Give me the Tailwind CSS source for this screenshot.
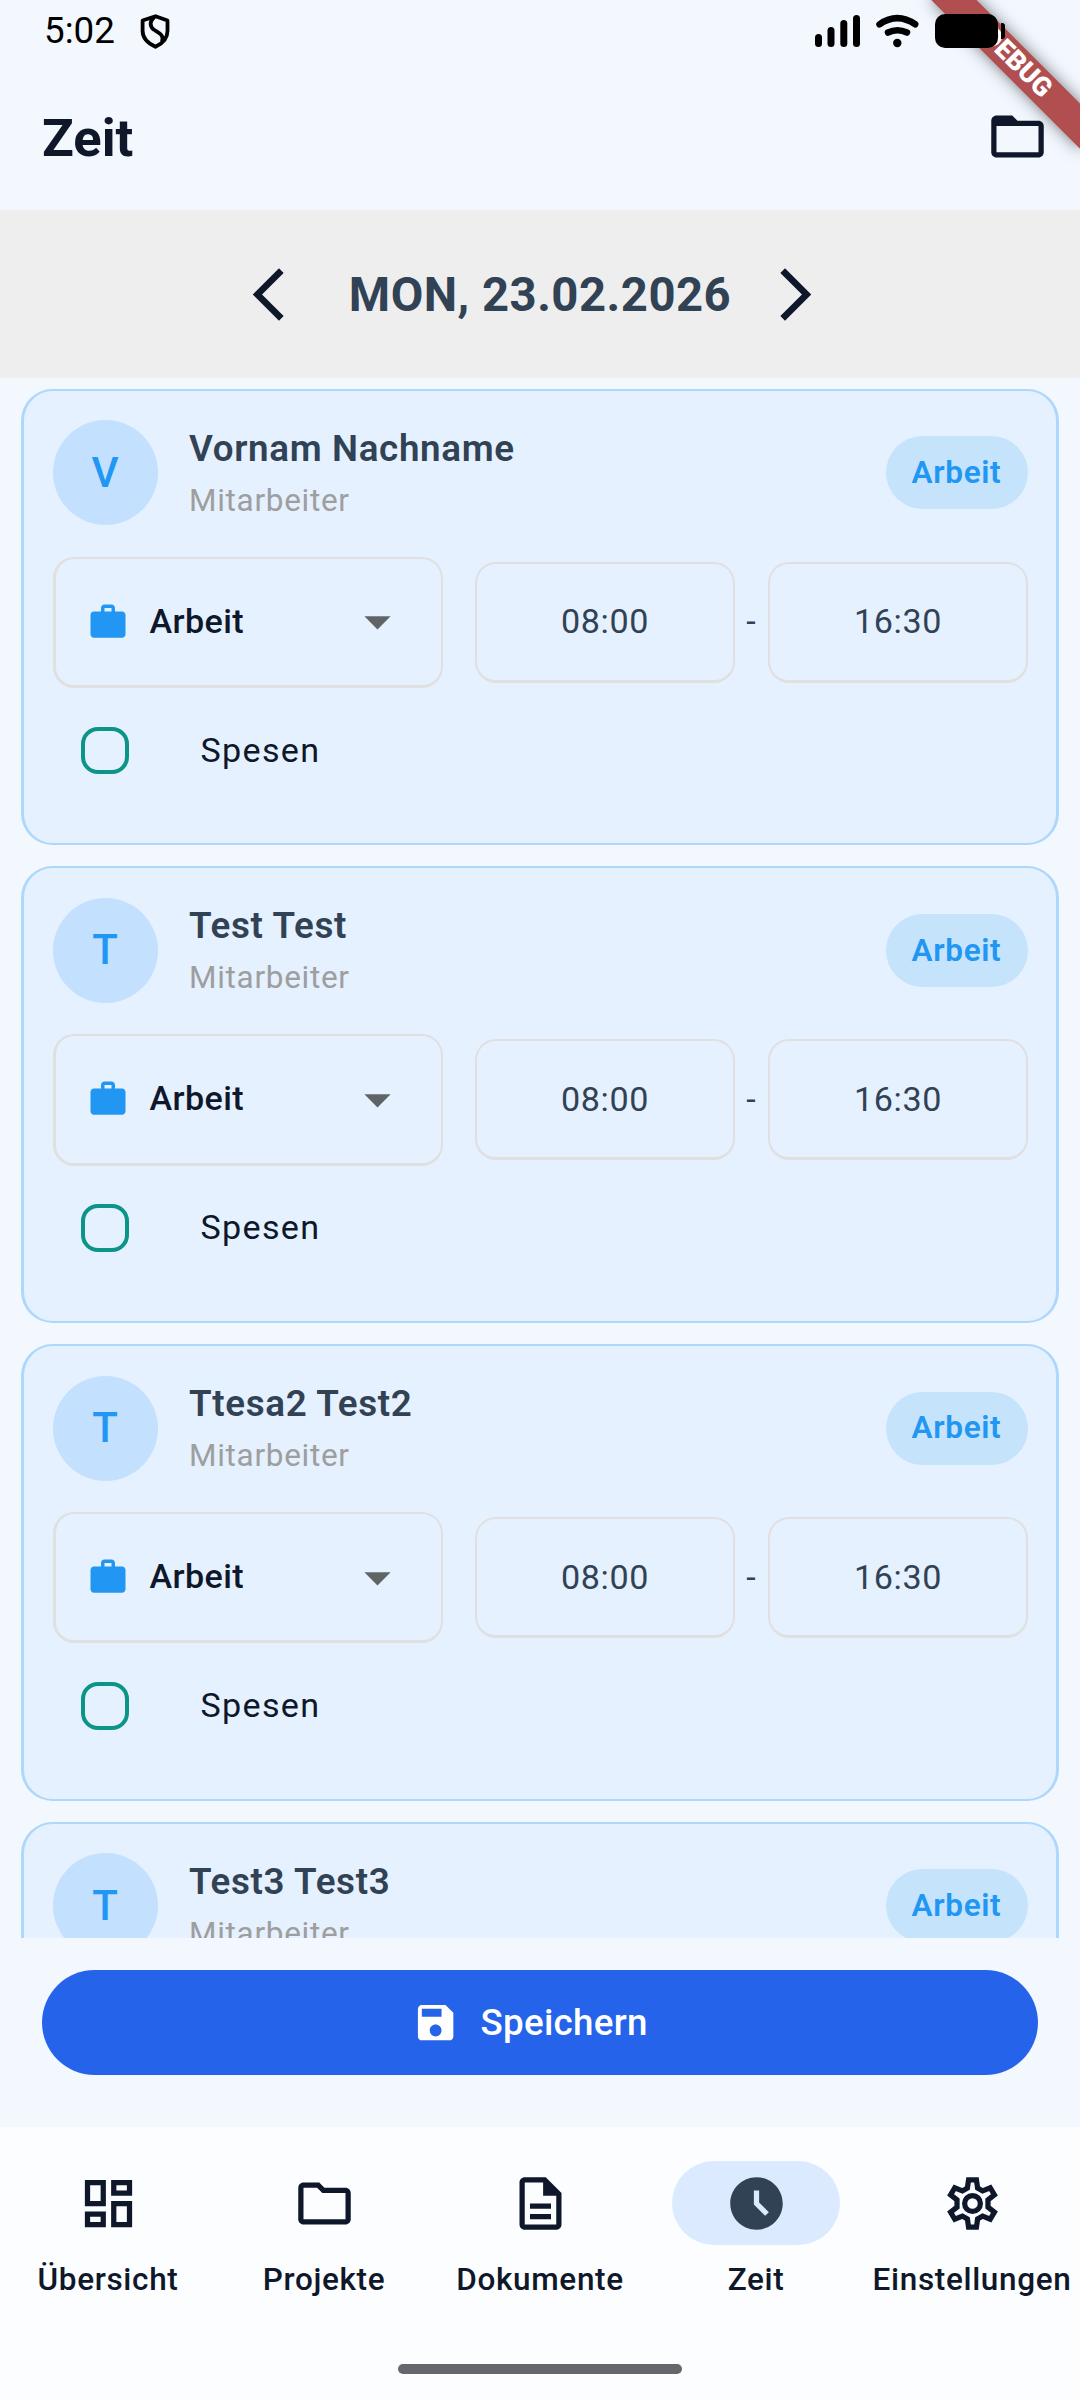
<!DOCTYPE html>
<html lang="de">
<head>
<meta charset="utf-8">
<title>Zeit</title>
<script src="https://cdn.jsdelivr.net/npm/@tailwindcss/browser@4"></script>
</head>
<body class="w-[1080px] h-[2400px] overflow-hidden bg-[#f3f8ff] font-['Roboto',sans-serif] text-[#0f172a]">
<div class="relative flex h-[2400px] w-[1080px] flex-col overflow-hidden">

  <!-- debug ribbon -->
  <div class="absolute top-0 right-0 h-[210px] w-[210px] overflow-hidden">
    <div class="absolute top-[47.35px] left-[41.9px] flex h-[31.5px] w-[210px] rotate-45 items-center justify-center bg-[#b04e50] text-[26.8px] leading-none font-black text-white shadow-[0_0_16px_rgba(0,0,0,0.5)]">DEBUG</div>
  </div>

  <!-- status bar -->
  <div class="relative flex h-[62px] shrink-0 items-start justify-between pl-[44px]">
    <div class="flex">
      <span class="mt-[9px] w-[96px] text-[36.75px] leading-[44px] text-black">5:02</span>
      <svg class="mt-[13px] h-[37px] w-[32px]" viewBox="0 0 32 37" fill="none" stroke="#000" stroke-width="3.800" stroke-linejoin="round"><path d="M15.500 3.200 27.500 7.500V18C27.500 25.500 21.500 31 15.500 33.800 9.500 31 2.600 25.500 2.600 18V7.500Z"/><path d="M14.500 4C9.500 8 9.500 13 13.500 16.500 18 19.500 25 22 22 29"/></svg>
    </div>
    <svg class="h-[62px] w-[270px]" viewBox="810 0 270 62" fill="#000">
      <rect x="815" y="34" width="7" height="13" rx="3.500"/><rect x="827.500" y="27" width="7" height="20" rx="3.500"/><rect x="840.300" y="20" width="7" height="27" rx="3.500"/><rect x="853" y="15" width="7" height="32" rx="3.500"/>
      <g fill="none" stroke="#000" stroke-width="6.500" stroke-linecap="round"><path d="M879.500 24.300Q897.300 12 915.200 24.300"/><path d="M888 32.500Q897.300 28 907 32.500"/></g>
      <circle cx="897.300" cy="43" r="4.200"/>
      <rect x="935" y="14" width="63" height="34" rx="10"/><path d="M1001 23h1a3 3 0 0 1 3 3v10a3 3 0 0 1-3 3h-1z"/>
    </svg>
  </div>

  <!-- app bar -->
  <header class="flex h-[148px] shrink-0 items-center justify-between pr-[31.5px] pl-[42px]">
    <h1 class="pt-[3px] text-[52.5px] leading-[64px] font-bold">Zeit</h1>
    <svg class="h-[63px] w-[63px]" viewBox="0 0 24 24" fill="#0f172a"><path d="M20 6h-8l-2-2H4c-1.100 0-1.990.9-1.990 2L2 18c0 1.100.9 2 2 2h16c1.100 0 2-.9 2-2V8c0-1.100-.9-2-2-2zm0 12H4V8h16v10z"/></svg>
  </header>

  <!-- date switcher -->
  <div class="flex h-[168px] shrink-0 items-center justify-center bg-[#eeeeee] pr-[16px]">
    <svg class="h-[63px] w-[63px]" viewBox="0 0 24 24" fill="#0f172a"><path d="M17.770 3.770 16 2 6 12l10 10 1.770-1.770L9.540 12z"/></svg>
    <span class="w-[463.500px] pt-[2px] pl-[16px] text-center text-[47.25px] leading-[60px] font-bold tracking-[0.5px] text-[#314254]">MON, 23.02.2026</span>
    <svg class="h-[63px] w-[63px]" viewBox="0 0 24 24" fill="#0f172a"><path d="M6.230 20.230 8 22l10-10L8 2 6.230 3.770 14.460 12z"/></svg>
  </div>

  <!-- employee list -->
  <main id="list" class="flex h-[1560px] shrink-0 flex-col gap-[21px] overflow-hidden px-[21px] pt-[10.5px]"></main>

  <!-- save -->
  <div class="h-[189px] shrink-0 px-[42px] pt-[32px]">
    <button class="flex h-[105px] w-full items-center justify-center gap-[21px] rounded-full bg-[#2563eb] pr-[20px] text-[36.75px] font-medium tracking-[0.26px] text-white">
      <svg class="h-[47.25px] w-[47.25px]" viewBox="0 0 24 24" fill="currentColor"><path d="M17 3H5c-1.110 0-2 .9-2 2v14c0 1.100.89 2 2 2h14c1.100 0 2-.9 2-2V7l-4-4zm-5 16c-1.660 0-3-1.340-3-3s1.340-3 3-3 3 1.340 3 3-1.340 3-3 3zm3-10H5V5h10v4z"/></svg>
      <span>Speichern</span>
    </button>
  </div>

  <!-- bottom navigation -->
  <nav class="relative grid h-[273px] shrink-0 grid-cols-5 bg-[#fcfdff] pt-[34px] text-[31.5px] leading-[42px] font-medium tracking-[0.66px]">
    <div class="flex flex-col items-center gap-[14px]">
      <div class="flex h-[84px] w-[168px] items-center justify-center"><svg class="h-[63px] w-[63px]" viewBox="0 0 24 24" fill="currentColor"><path d="M19 5v2h-4V5h4M9 5v6H5V5h4m10 8v6h-4v-6h4M9 17v2H5v-2h4M21 3h-8v6h8V3zM11 3H3v10h8V3zm10 8h-8v10h8V11zm-10 4H3v6h8v-6z"/></svg></div>
      <span>Übersicht</span>
    </div>
    <div class="flex flex-col items-center gap-[14px]">
      <div class="flex h-[84px] w-[168px] items-center justify-center"><svg class="h-[63px] w-[63px]" viewBox="0 0 24 24" fill="currentColor"><path d="M9.170 6l2 2H20v10H4V6h5.170M10 4H4c-1.100 0-1.990.9-1.990 2L2 18c0 1.100.9 2 2 2h16c1.100 0 2-.9 2-2V8c0-1.100-.9-2-2-2h-8l-2-2z"/></svg></div>
      <span>Projekte</span>
    </div>
    <div class="flex flex-col items-center gap-[14px]">
      <div class="flex h-[84px] w-[168px] items-center justify-center"><svg class="h-[63px] w-[63px]" viewBox="0 0 24 24" fill="currentColor"><path d="M8 16h8v2H8zm0-4h8v2H8zm6-10H6c-1.100 0-2 .9-2 2v16c0 1.100.89 2 1.990 2H18c1.100 0 2-.9 2-2V8l-6-6zm4 18H6V4h7v5h5v11z"/></svg></div>
      <span>Dokumente</span>
    </div>
    <div class="flex flex-col items-center gap-[14px]">
      <div class="flex h-[84px] w-[168px] items-center justify-center rounded-full bg-[#dbeafe]"><svg class="h-[63px] w-[63px] text-[#314254]" viewBox="0 0 24 24" fill="currentColor"><path d="M11.990 2C6.470 2 2 6.480 2 12s4.470 10 9.990 10C17.520 22 22 17.520 22 12S17.520 2 11.990 2zm3.300 14.710L11 12.410V7h2v4.590l3.710 3.710-1.420 1.410z"/></svg></div>
      <span>Zeit</span>
    </div>
    <div class="flex flex-col items-center gap-[14px]">
      <div class="flex h-[84px] w-[168px] items-center justify-center"><svg class="h-[63px] w-[63px]" viewBox="0 0 24 24" fill="none" stroke="currentColor" stroke-width="2"><path d="M10.500 3h3l.45 3.100 1.900 1.100 2.900-1.200 1.600 2.700-2.450 1.900v2.800l2.450 1.900-1.600 2.700-2.900-1.200-1.900 1.100-.45 3.100h-3l-.45-3.100-1.900-1.100-2.900 1.200-1.600-2.700 2.450-1.900v-2.800L3.650 8.700l1.600-2.700 2.900 1.200 1.900-1.100z"/><circle cx="12" cy="12" r="3"/></svg></div>
      <span>Einstellungen</span>
    </div>
    <div class="absolute top-[237px] left-[398px] h-[10px] w-[284px] rounded-full bg-[#64676c]"></div>
  </nav>
</div>

<template id="card">
  <section class="flex h-[456.75px] shrink-0 flex-col rounded-[31.5px] border-x-3 border-y-2 border-[#aed8fb] bg-[#e5f1fe] px-[28.5px] pt-[29.5px]">
    <div class="flex h-[105px] items-center">
      <div data-k="initial" class="flex h-[105px] w-[105px] items-center justify-center rounded-full bg-[#c3e0fe] text-[42px] leading-none font-medium text-[#2196f3]"></div>
      <div class="ml-[31.5px] flex-1 pt-[4px]">
        <div data-k="name" class="text-[36.75px] leading-[52px] font-semibold tracking-[0.66px] text-[#314254]"></div>
        <div class="text-[31.5px] leading-[52px] tracking-[0.7px] text-[#9e9e9e]">Mitarbeiter</div>
      </div>
      <div class="flex h-[73px] w-[142px] items-center justify-center rounded-full bg-[#c5e3fb] text-[31.5px] leading-none font-semibold tracking-[0.66px] text-[#2196f3]">Arbeit</div>
    </div>
    <div class="mt-[31.5px] flex h-[131.25px] items-center">
      <div class="flex h-full w-[390.5px] items-center rounded-[21px] border-2 border-b-3 border-l-3 border-[#e0e0e0] pr-[32px] pl-[31px]">
        <svg class="h-[42px] w-[42px] text-[#2196f3]" viewBox="0 0 24 24" fill="currentColor"><path d="M20 6h-4V4c0-1.110-.89-2-2-2h-4c-1.110 0-2 .89-2 2v2H4c-1.110 0-1.990.89-1.990 2L2 19c0 1.110.89 2 2 2h16c1.110 0 2-.89 2-2V8c0-1.110-.89-2-2-2zm-6 0h-4V4h4v2z"/></svg>
        <span class="ml-[21px] flex-1 pb-[2px] text-[34.125px] leading-none font-medium tracking-[0.4px]">Arbeit</span>
        <svg class="h-[63px] w-[63px] text-[#616466]" viewBox="0 0 24 24" fill="currentColor"><path d="M7 10l5 5 5-5z"/></svg>
      </div>
      <div class="ml-[31.5px] flex h-[121px] w-[260px] items-center justify-center rounded-[21px] border-2 border-b-3 border-[#e0e0e0] pb-[1px] pl-[1px] text-[34.125px] leading-none tracking-[0.66px] text-[#314254]">08:00</div>
      <span class="flex-1 pb-[2px] text-center text-[34.125px] leading-none text-[#314254]">-</span>
      <div class="flex h-[121px] w-[260px] items-center justify-center rounded-[21px] border-2 border-b-3 border-[#e0e0e0] pb-[1px] pl-[1px] text-[34.125px] leading-none tracking-[0.66px] text-[#314254]">16:30</div>
    </div>
    <div class="mt-[31px] flex h-[63px] items-center">
      <span class="ml-[28.5px] h-[47.5px] w-[48px] rounded-[17px] border-4 border-[#0d9488]"></span>
      <span class="ml-[71.5px] pb-[1px] text-[34.125px] leading-none tracking-[1.3px]">Spesen</span>
    </div>
  </section>
</template>
<script>
  const list = document.getElementById('list');
  const tpl = document.getElementById('card');
  for (const name of ['Vornam Nachname', 'Test Test', 'Ttesa2 Test2', 'Test3 Test3']) {
    const card = tpl.content.cloneNode(true);
    card.querySelector('[data-k=initial]').textContent = name[0];
    card.querySelector('[data-k=name]').textContent = name;
    list.append(card);
  }
</script>
</body>
</html>
